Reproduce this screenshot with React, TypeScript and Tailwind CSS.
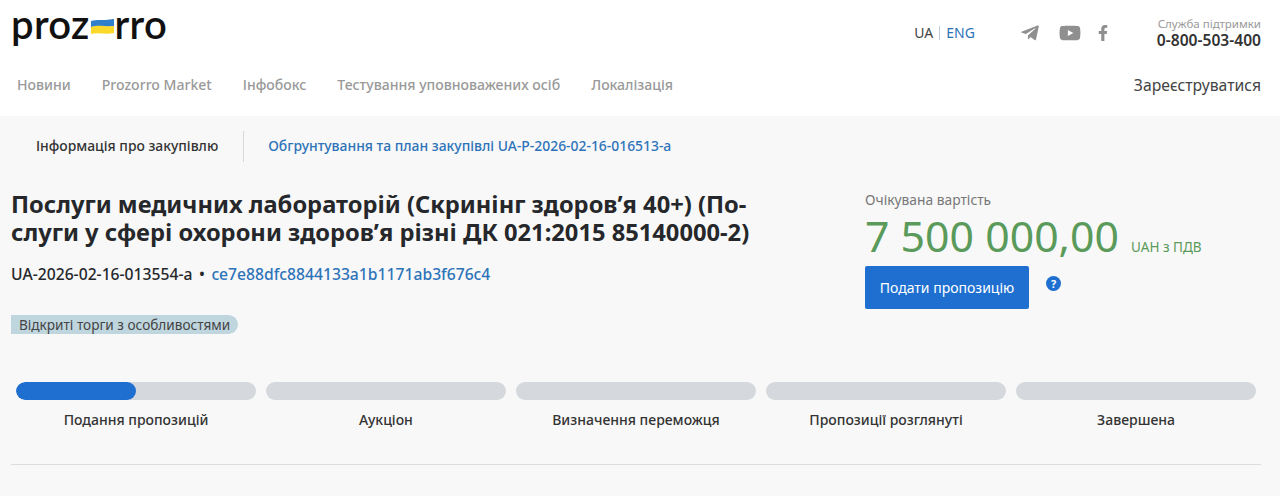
import { FaFacebookF, FaTelegramPlane, FaYoutube } from 'react-icons/fa';

const NAV = ['Новини', 'Prozorro Market', 'Інфобокс', 'Тестування уповноважених осіб', 'Локалізація'];
const STEPS = ['Подання пропозицій', 'Аукціон', 'Визначення переможця', 'Пропозиції розглянуті', 'Завершена'];

function Logo() {
  return (
    <div className="flex h-[34px] items-center font-['Lato',sans-serif] text-[40px] leading-none font-semibold tracking-[0.3px] text-[#111]">
      <span>proz</span>
      <svg width="23" height="17" viewBox="0 0 23 17" className="mx-[1px] mt-[5px]">
        <path d="M0 3 C6 1 10 3 23 1 V8 C14 10 8 7 0 9 Z" fill="#2f7fcb" />
        <path d="M0 9 C8 6 14 9 23 8 V15 C14 17 8 14 0 16 Z" fill="#fbd92b" />
      </svg>
      <span>rro</span>
    </div>
  );
}

export default function App() {
  return (
    <div className="h-[496px] overflow-hidden bg-[#f8f8f8] font-['Noto_Sans',sans-serif] text-[#25272b]">
      <header className="h-[116px] bg-white px-[11px]">
        <div className="flex h-[68px] items-start justify-between pr-[8px]">
          <div className="mt-[7px]"><Logo /></div>
          <div className="mt-[16px] flex items-center">
            <div className="flex items-center text-[14px] leading-[16px]">
              <span className="text-[#444]">UA</span>
              <span className="mx-[6px] h-[14px] w-px bg-[#bcd0e2]" />
              <span className="text-[#2d73b9]">ENG</span>
            </div>
            <div className="ml-[45px] flex items-center text-[#8f8f8f]">
              <FaTelegramPlane className="h-[20px] w-[20px]" />
              <FaYoutube className="ml-[19px] h-[22px] w-[22px]" />
              <FaFacebookF className="ml-[16px] h-[16px] w-[12px]" />
            </div>
            <div className="ml-[48px] text-right">
              <div className="text-[11.5px] leading-[15px] text-[#999]">Служба підтримки</div>
              <div className="text-[15.6px] leading-[19px] font-semibold text-[#333]">0-800-503-400</div>
            </div>
          </div>
        </div>
        <nav className="flex items-center justify-between pl-[6px] pr-[0px]">
          <div className="flex gap-[31px] text-[14.05px] leading-[34px] font-medium text-[#999]">
            {NAV.map((item) => <span key={item}>{item}</span>)}
          </div>
          <span className="mr-[8px] text-[15.75px] leading-[34px] text-[#444]">Зареєструватися</span>
        </nav>
      </header>

      <div className="mt-[15px] flex h-[31px] items-center pl-[36px] text-[13.9px]">
        <span className="font-medium text-[#333]">Інформація про закупівлю</span>
        <span className="mx-[24.5px] h-[31px] w-px bg-[#d8d8d8]" />
        <a className="font-medium text-[#2d73b9]">Обгрунтування та план закупівлі UA-P-2026-02-16-016513-a</a>
      </div>

      <main className="flex px-[11px] pt-[28px]">
        <div className="w-[854px] shrink-0">
          <h1 className="w-[780px] text-[23.7px] leading-[28px] font-bold text-[#25272b]">
            Послуги медичних лабораторій (Скринінг здоров’я 40+) (По-<br />слуги у сфері охорони здоров’я різні ДК 021:2015 85140000-2)
          </h1>
          <div className="mt-[18px] flex items-center text-[15.7px] leading-[20px] font-medium">
            <span>UA-2026-02-16-013554-a</span>
            <span className="mx-[6.5px]">•</span>
            <a className="text-[#2d73b9]">ce7e88dfc8844133a1b1171ab3f676c4</a>
          </div>
          <div className="mt-[31px] inline-block rounded-r-full bg-[#c0d6df] px-[8px] text-[13.6px] leading-[19px] text-[#444]">
            Відкриті торги з особливостями
          </div>
        </div>
        <div>
          <div className="text-[13.8px] leading-[19px] text-[#777]">Очікувана вартість</div>
          <div className="flex items-baseline text-[#5a9a5a]">
            <span className="text-[42.8px] leading-[54px]">7 500 000,00</span>
            <span className="ml-[12px] text-[13.5px]">UAH з ПДВ</span>
          </div>
          <div className="mt-[3px] flex items-start">
            <button className="h-[43px] w-[164px] rounded-[2px] bg-[#1e6fd0] text-[14px] text-white">Подати пропозицію</button>
            <span className="ml-[17px] mt-[10px] flex h-[15px] w-[15px] items-center justify-center rounded-full bg-[#1e6fd0] text-[11px] leading-none font-bold text-white">?</span>
          </div>
        </div>
      </main>

      <div className="mt-[46px] grid grid-cols-5 gap-[10px] pl-[16px] pr-[24px]">
        {STEPS.map((step, i) => (
          <div key={step}>
            <div className="h-[18px] overflow-hidden rounded-full bg-[#d5d8dc]">
              {i === 0 && <div className="h-full w-1/2 rounded-full bg-[#1e6fd0]" />}
            </div>
            <div className="mt-[10px] text-center text-[14px] leading-[20px] font-medium text-[#333]">{step}</div>
          </div>
        ))}
      </div>

      <div className="mx-[11px] mt-[34px] w-[1250px] border-t border-[#dcdcdc]" />
    </div>
  );
}
